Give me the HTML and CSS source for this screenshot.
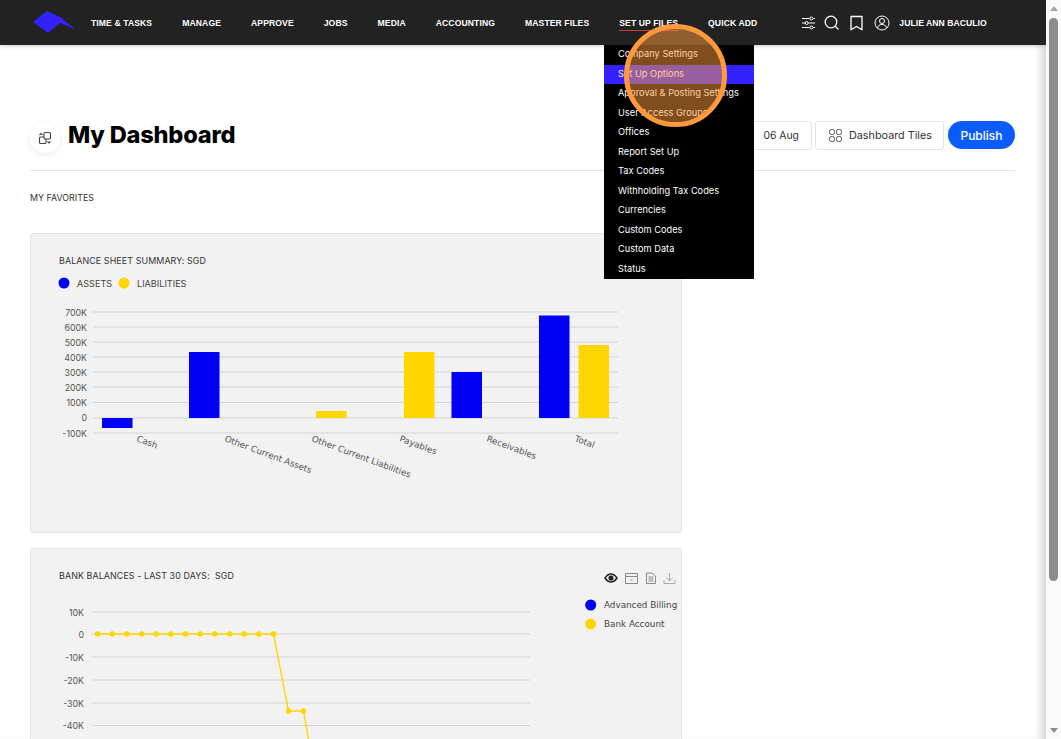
FILE: index.html
```html
<!DOCTYPE html>
<html lang="en">
<head>
<meta charset="utf-8">
<title>My Dashboard</title>
<link rel="stylesheet" href="styles.css">
</head>
<body>
<div class="app">
  <div class="page">
    <header class="topbar">
      <svg class="logo" viewBox="0 0 46 25" width="46" height="25"><path d="M0 12 14 1 27 7 42 19 27 13 15 23Z" fill="#3322ff"/></svg>
      <nav class="nav">
        <a>TIME &amp; TASKS</a><a>MANAGE</a><a>APPROVE</a><a>JOBS</a><a>MEDIA</a><a>ACCOUNTING</a><a>MASTER FILES</a><a class="current">SET UP FILES</a><a>QUICK ADD</a>
      </nav>
      <div class="tools">
        <svg class="tool tool-tight" viewBox="0 0 14 14" width="14" height="14" fill="none" stroke="#fff" stroke-width="1"><path d="M0 2.500H7.500M11 2.500H13M0 7H3M6.500 7H13M0 11.500H7.500M11 11.500H13"/><circle cx="9.300" cy="2.500" r="1.500"/><circle cx="4.700" cy="7" r="1.500"/><circle cx="9.300" cy="11.500" r="1.500"/></svg>
        <svg class="tool" viewBox="0 0 16 16" width="16" height="16" fill="none" stroke="#fff" stroke-width="1.300"><circle cx="7" cy="7" r="5.800"/><path d="M11 11 14.500 14.500"/></svg>
        <svg class="tool" viewBox="0 0 14 16" width="14" height="16" fill="none" stroke="#fff" stroke-width="1.300"><path d="M1 1.500H12V14.800L6.500 11.500 1 14.800Z" stroke-linejoin="round"/></svg>
        <svg class="tool" viewBox="0 0 16 16" width="16" height="16" fill="none" stroke="#fff" stroke-width="1"><circle cx="8" cy="8" r="7"/><circle cx="8" cy="6" r="2.500"/><path d="M3.500 13c.5-3 2.500-3.500 4.500-3.500s4 .5 4.500 3.500"/></svg>
        <span class="user">JULIE ANN BACULIO</span>
      </div>
    </header>

    <main class="content">
      <div class="title-row">
        <div class="title-left">
          <span class="title-icon">
            <svg viewBox="0 0 14 14" width="14" height="14" fill="none" stroke="#444" stroke-width="1.100"><path d="M6 6H2.500a1 1 0 0 0-1 1v4.500a1 1 0 0 0 1 1H7a1 1 0 0 0 1-1V8"/><rect x="6" y="1.500" width="6.500" height="6.500" rx="1"/><path d="M1.500 4 3 2.500 4.500 4M9.500 10.500 11 12 12.500 10.500"/></svg>
          </span>
          <h1>My Dashboard</h1>
        </div>
        <div class="actions">
          <button class="btn btn-date">06 Aug</button>
          <button class="btn btn-tiles">
            <svg viewBox="0 0 13 13" width="13" height="13" fill="none" stroke="#555" stroke-width="1"><rect x=".5" y=".5" width="5" height="5" rx="1.800"/><rect x="7.500" y=".5" width="5" height="5" rx="1.800"/><rect x=".5" y="7.500" width="5" height="5" rx="1.800"/><rect x="7.500" y="7.500" width="5" height="5" rx="1.800"/></svg>
            Dashboard Tiles
          </button>
          <button class="btn-primary">Publish</button>
        </div>
      </div>

      <p class="section-label">MY FAVORITES</p>

      <section class="card card-balance">
        <svg class="chart" viewBox="0 0 652 300" width="652" height="300">
          <text class="card-title" x="29" y="31">BALANCE SHEET SUMMARY: SGD</text>
          <circle cx="34" cy="50" r="5.500" fill="#0000f5"/>
          <text class="legend-caps" x="47" y="54">ASSETS</text>
          <circle cx="94" cy="50" r="5.500" fill="#ffd600"/>
          <text class="legend-caps" x="107" y="54">LIABILITIES</text>
          <g class="grid">
            <path d="M63 79H588M63 94H588M63 109H588M63 124H588M63 139H588M63 154H588M63 169.500H588M63 185H588M63 200H588"/>
          </g>
          <g class="axis">
            <text x="57" y="83">700K</text><text x="57" y="98">600K</text><text x="57" y="113">500K</text><text x="57" y="128">400K</text><text x="57" y="143">300K</text><text x="57" y="158">200K</text><text x="57" y="173">100K</text><text x="57" y="188">0</text><text x="57" y="204">-100K</text>
          </g>
          <g fill="#0000f5">
            <rect x="72" y="185" width="30.500" height="10"/>
            <rect x="159" y="119" width="30.500" height="66"/>
            <rect x="421.500" y="139" width="30.500" height="46"/>
            <rect x="509" y="82.500" width="30.500" height="102.500"/>
          </g>
          <g fill="#ffd600">
            <rect x="286" y="178" width="30.500" height="7"/>
            <rect x="374" y="119" width="30.500" height="66"/>
            <rect x="548.500" y="112" width="30.500" height="73"/>
          </g>
          <g class="tick">
            <text transform="translate(106 208) rotate(20.500)">Cash</text>
            <text transform="translate(194 208) rotate(20.500)">Other Current Assets</text>
            <text transform="translate(281 208) rotate(20.500)">Other Current Liabilities</text>
            <text transform="translate(369 208) rotate(20.500)">Payables</text>
            <text transform="translate(456 208) rotate(20.500)">Receivables</text>
            <text transform="translate(544 208) rotate(20.500)">Total</text>
          </g>
        </svg>
      </section>

      <section class="card card-bank">
        <svg class="chart" viewBox="0 0 652 200" width="652" height="200">
          <text class="card-title" x="29" y="31">BANK BALANCES - LAST 30 DAYS:&#160; SGD</text>
          <g class="grid">
            <path d="M62 64H500M62 86H500M62 109H500M62 132H500M62 155H500M62 177.500H500"/>
          </g>
          <g class="axis">
            <text x="54" y="68">10K</text><text x="54" y="90">0</text><text x="54" y="113">-10K</text><text x="54" y="136">-20K</text><text x="54" y="159">-30K</text><text x="54" y="181">-40K</text>
          </g>
          <g transform="translate(.5 0)">
            <path d="M67 86H243L258 163H273L290 260" fill="none" stroke="#ffd600" stroke-width="1.400"/>
            <g fill="#ffd600">
              <circle cx="67" cy="86" r="2.800"/><circle cx="81.700" cy="86" r="2.800"/><circle cx="96.300" cy="86" r="2.800"/><circle cx="111" cy="86" r="2.800"/><circle cx="125.700" cy="86" r="2.800"/><circle cx="140.300" cy="86" r="2.800"/><circle cx="155" cy="86" r="2.800"/><circle cx="169.700" cy="86" r="2.800"/><circle cx="184.300" cy="86" r="2.800"/><circle cx="199" cy="86" r="2.800"/><circle cx="213.700" cy="86" r="2.800"/><circle cx="228.300" cy="86" r="2.800"/><circle cx="243" cy="86" r="2.800"/><circle cx="258" cy="163" r="2.800"/><circle cx="273" cy="163" r="2.800"/>
            </g>
          </g>
          <circle cx="560.700" cy="57" r="5.500" fill="#0000f5"/>
          <text class="legend" x="574" y="60">Advanced Billing</text>
          <circle cx="560.700" cy="76" r="5.500" fill="#ffd600"/>
          <text class="legend" x="574" y="79">Bank Account</text>
          <g fill="none" stroke="#222" stroke-width="1.500">
            <path d="M575 30c2-3 4-4 6-4s4 1 6 4c-2 3-4 4-6 4s-4-1-6-4Z"/>
            <circle cx="581" cy="30" r="1.800" fill="#222"/>
          </g>
          <g fill="none" stroke="#8a8a8a" stroke-width="1">
            <path d="M595.500 25.500H607.500V35.500H595.500ZM595.500 28.500H607.500M600.500 32H602.500"/>
            <path d="M616.500 25H622L625.500 28V35.500H616.500ZM618.500 29H623.500M618.500 31H623.500M618.500 33H623.500"/>
          </g>
          <path d="M639.500 25V33M636 29.500 639.500 33 643 29.500M634 32V35.500H645V32" fill="none" stroke="#aaa" stroke-width="1"/>
        </svg>
      </section>
    </main>
  </div>
  <div class="scrollbar">
    <span class="arrow-up"></span>
    <span class="thumb"></span>
    <span class="arrow-down"></span>
  </div>

  <ul class="dropdown">
    <li>Company Settings</li>
    <li class="active">Set Up Options</li>
    <li>Approval &amp; Posting Settings</li>
    <li>User Access Groups</li>
    <li>Offices</li>
    <li>Report Set Up</li>
    <li>Tax Codes</li>
    <li>Withholding Tax Codes</li>
    <li>Currencies</li>
    <li>Custom Codes</li>
    <li>Custom Data</li>
    <li>Status</li>
  </ul>
  <div class="spotlight"></div>
</div>
</body>
</html>
```

FILE: styles.css
```css
* { box-sizing: border-box; }
html, body { margin: 0; height: 100%; overflow: hidden; }
body { background: #fff; font-family: "Inter", "Liberation Sans", sans-serif; color: #000; }
.app { position: relative; display: flex; width: 1061px; height: 739px; overflow: hidden; }
.page { flex: 1; min-width: 0; display: flex; flex-direction: column; box-shadow: inset -10px 0 10px -6px #d0d0d0; }

.topbar { flex: none; height: 45px; background: #222; display: flex; align-items: center; padding-left: 33px; box-shadow: 0 1px 4px rgba(0,0,0,.2); position: relative; }
.logo { flex: none; margin-right: 12px; }
.nav { display: flex; gap: 30px; }
.nav a { position: relative; font: 700 8.600px/12px "Liberation Sans", sans-serif; color: #fff; letter-spacing: .1px; white-space: nowrap; }
.nav a.current::after { content: ""; position: absolute; left: 0; right: 0; bottom: -2px; height: 1px; background: #c8402a; }
.tools { display: flex; align-items: center; margin-left: 45px; gap: 10px; }
.tool { flex: none; }
.tool-tight { margin-right: -2px; }
.user { margin-left: -1px; font: 700 8.600px/12px "Liberation Sans", sans-serif; color: #fff; letter-spacing: .05px; white-space: nowrap; }

.content { flex: 1; min-height: 0; padding: 76px 31px 0 30px; overflow: hidden; }
.title-row { display: flex; justify-content: space-between; align-items: flex-start; height: 50px; border-bottom: 1px solid #e4e4e4; }
.title-left { display: flex; align-items: flex-start; gap: 8px; }
.title-icon { width: 30px; height: 30px; margin-top: 2px; border-radius: 50%; background: #fff; box-shadow: 0 2px 7px rgba(0,0,0,.08); display: flex; align-items: center; justify-content: center; }
h1 { margin: -1px 0 0; font: 800 23.600px/30px "Inter", sans-serif; letter-spacing: -.2px; color: #000; }
.actions { display: flex; align-items: flex-start; gap: 3px; }
.btn { height: 29px; display: flex; align-items: center; background: #fff; border: 1px solid #e4e4e4; border-radius: 3px; font: 400 10.800px "Inter", sans-serif; color: #333; white-space: nowrap; }
.btn-date { width: 120px; padding: 0 12px; justify-content: flex-end; font-size: 10.400px; }
.btn-tiles { width: 129px; padding: 0 0 0 13px; gap: 7px; }
.btn-primary { height: 28px; width: 67px; margin-left: 1px; border: 0; border-radius: 14px; background: #0a5cff; color: #fff; font: 500 12px "Inter", sans-serif; }

.section-label { margin: 21px 0 0; font-size: 8.900px; line-height: 11px; color: #333; }

.card { width: 652px; margin-top: 15px; background: #f2f2f2; border: 1px solid #e6e6e6; border-radius: 3px; overflow: hidden; }
.card-balance { height: 300px; margin-top: 30px; }
.card-bank { height: 200px; }
.chart { display: block; margin: -1px; }
.chart text { font-family: "Inter", sans-serif; fill: #444; }
.card-title { font-size: 8.900px; letter-spacing: .1px; }
.chart .card-title { fill: #333; }
.legend-caps { font-size: 9.100px; }
.legend { font-size: 8.800px; }
.chart .legend { font-family: "DejaVu Sans", sans-serif; }
.grid path { stroke: #d4d4d4; stroke-width: 1; fill: none; }
.axis text { font-size: 8.800px; text-anchor: end; fill: #555; }
.chart .tick text { font-family: "DejaVu Sans", sans-serif; font-size: 8.800px; fill: #555; }

.scrollbar { flex: none; width: 15px; background: #fafafa; position: relative; display: flex; flex-direction: column; align-items: center; }
.arrow-up { margin-top: 6px; width: 0; height: 0; border: 4.500px solid transparent; border-top: 0; border-bottom: 5px solid #a3a3a3; }
.thumb { margin-top: 7px; width: 9px; height: 563px; background: #8c8c8c; border-radius: 5px; }
.arrow-down { margin-top: auto; margin-bottom: 6px; width: 0; height: 0; border: 4.500px solid transparent; border-bottom: 0; border-top: 5px solid #8c8c8c; }

.dropdown { position: absolute; left: 604px; top: 45px; width: 150px; height: 234px; margin: 0; padding: 0; list-style: none; background: #000; }
.dropdown li { height: 19.500px; padding-left: 14px; font: 400 9.200px/18px "Inter", sans-serif; letter-spacing: .03px; color: #fff; white-space: nowrap; }
.dropdown li.active { background: #3322ff; }
.spotlight { position: absolute; left: 624px; top: 24px; width: 103px; height: 103px; border-radius: 50%; border: 5px solid #ff9a3c; background: rgba(255,154,60,.5); }
```
